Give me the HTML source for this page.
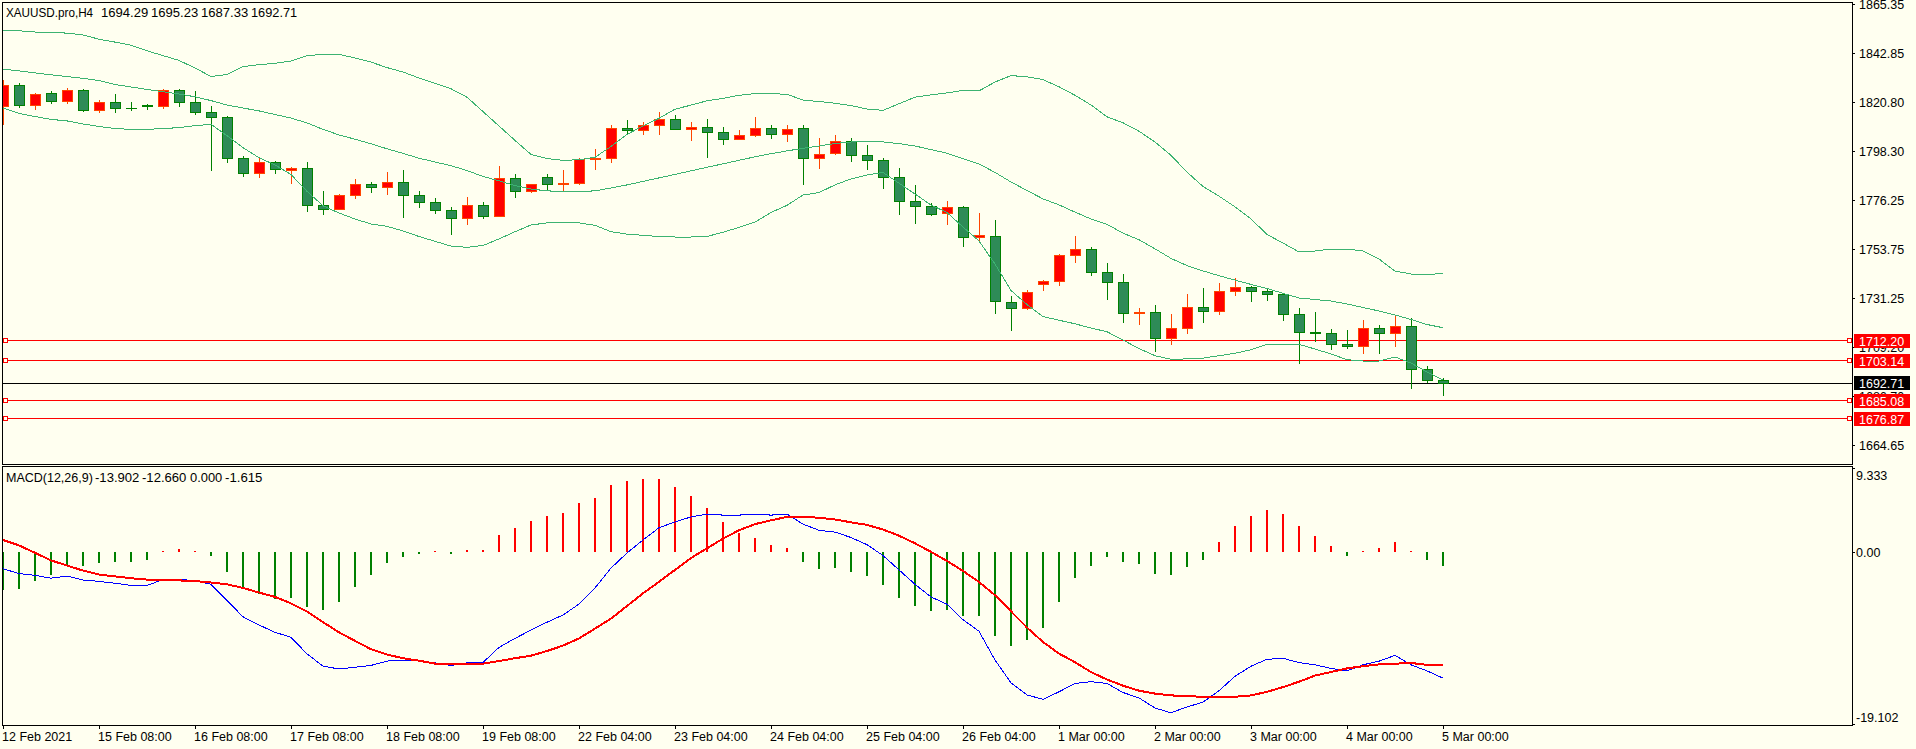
<!DOCTYPE html>
<html><head><meta charset="utf-8"><title>XAUUSD.pro,H4</title>
<style>html,body{margin:0;padding:0;background:#FFFFF0;overflow:hidden;width:1916px;height:749px}svg{display:block}</style>
</head><body>
<svg width="1916" height="749" viewBox="0 0 1916 749" shape-rendering="crispEdges">
<defs><clipPath id="cm"><rect x="3" y="3" width="1849" height="461"/></clipPath><clipPath id="cd"><rect x="3" y="467" width="1849" height="258"/></clipPath></defs>
<rect x="0" y="0" width="1916" height="749" fill="#FFFFF0"/>
<g clip-path="url(#cm)">
<rect x="3" y="340" width="1849" height="1" fill="#FF0000"/>
<rect x="3" y="360" width="1849" height="1" fill="#FF0000"/>
<rect x="3" y="400" width="1849" height="1" fill="#FF0000"/>
<rect x="3" y="418" width="1849" height="1" fill="#FF0000"/>
<rect x="3" y="383" width="1849" height="1" fill="#000000"/>
<rect x="3" y="80" width="1" height="45" fill="#FF4500"/>
<rect x="-2" y="85" width="11" height="22" fill="#FF4500"/>
<rect x="-1" y="86" width="9" height="20" fill="#FF0000"/>
<rect x="19" y="83" width="1" height="25" fill="#008000"/>
<rect x="14" y="85" width="11" height="21" fill="#008000"/>
<rect x="15" y="86" width="9" height="19" fill="#2E8B57"/>
<rect x="35" y="93" width="1" height="17" fill="#FF4500"/>
<rect x="30" y="94" width="11" height="12" fill="#FF4500"/>
<rect x="31" y="95" width="9" height="10" fill="#FF0000"/>
<rect x="51" y="91" width="1" height="13" fill="#008000"/>
<rect x="46" y="93" width="11" height="9" fill="#008000"/>
<rect x="47" y="94" width="9" height="7" fill="#2E8B57"/>
<rect x="67" y="88" width="1" height="16" fill="#FF4500"/>
<rect x="62" y="90" width="11" height="12" fill="#FF4500"/>
<rect x="63" y="91" width="9" height="10" fill="#FF0000"/>
<rect x="83" y="89" width="1" height="23" fill="#008000"/>
<rect x="78" y="90" width="11" height="21" fill="#008000"/>
<rect x="79" y="91" width="9" height="19" fill="#2E8B57"/>
<rect x="99" y="100" width="1" height="13" fill="#FF4500"/>
<rect x="94" y="102" width="11" height="9" fill="#FF4500"/>
<rect x="95" y="103" width="9" height="7" fill="#FF0000"/>
<rect x="115" y="94" width="1" height="19" fill="#008000"/>
<rect x="110" y="102" width="11" height="7" fill="#008000"/>
<rect x="111" y="103" width="9" height="5" fill="#2E8B57"/>
<rect x="131" y="102" width="1" height="9" fill="#008000"/>
<rect x="126" y="108" width="11" height="1" fill="#008000"/>
<rect x="147" y="104" width="1" height="6" fill="#008000"/>
<rect x="142" y="105" width="11" height="2" fill="#008000"/>
<rect x="163" y="89" width="1" height="20" fill="#FF4500"/>
<rect x="158" y="90" width="11" height="17" fill="#FF4500"/>
<rect x="159" y="91" width="9" height="15" fill="#FF0000"/>
<rect x="179" y="89" width="1" height="18" fill="#008000"/>
<rect x="174" y="90" width="11" height="13" fill="#008000"/>
<rect x="175" y="91" width="9" height="11" fill="#2E8B57"/>
<rect x="195" y="91" width="1" height="24" fill="#008000"/>
<rect x="190" y="102" width="11" height="11" fill="#008000"/>
<rect x="191" y="103" width="9" height="9" fill="#2E8B57"/>
<rect x="211" y="106" width="1" height="65" fill="#008000"/>
<rect x="206" y="112" width="11" height="6" fill="#008000"/>
<rect x="207" y="113" width="9" height="4" fill="#2E8B57"/>
<rect x="227" y="116" width="1" height="47" fill="#008000"/>
<rect x="222" y="117" width="11" height="42" fill="#008000"/>
<rect x="223" y="118" width="9" height="40" fill="#2E8B57"/>
<rect x="243" y="156" width="1" height="21" fill="#008000"/>
<rect x="238" y="158" width="11" height="16" fill="#008000"/>
<rect x="239" y="159" width="9" height="14" fill="#2E8B57"/>
<rect x="259" y="158" width="1" height="20" fill="#FF4500"/>
<rect x="254" y="162" width="11" height="12" fill="#FF4500"/>
<rect x="255" y="163" width="9" height="10" fill="#FF0000"/>
<rect x="275" y="161" width="1" height="13" fill="#008000"/>
<rect x="270" y="162" width="11" height="8" fill="#008000"/>
<rect x="271" y="163" width="9" height="6" fill="#2E8B57"/>
<rect x="291" y="167" width="1" height="17" fill="#FF4500"/>
<rect x="286" y="168" width="11" height="3" fill="#FF4500"/>
<rect x="287" y="169" width="9" height="1" fill="#FF0000"/>
<rect x="307" y="162" width="1" height="50" fill="#008000"/>
<rect x="302" y="168" width="11" height="38" fill="#008000"/>
<rect x="303" y="169" width="9" height="36" fill="#2E8B57"/>
<rect x="323" y="191" width="1" height="24" fill="#008000"/>
<rect x="318" y="205" width="11" height="5" fill="#008000"/>
<rect x="319" y="206" width="9" height="3" fill="#2E8B57"/>
<rect x="339" y="194" width="1" height="16" fill="#FF4500"/>
<rect x="334" y="195" width="11" height="15" fill="#FF4500"/>
<rect x="335" y="196" width="9" height="13" fill="#FF0000"/>
<rect x="355" y="179" width="1" height="20" fill="#FF4500"/>
<rect x="350" y="184" width="11" height="12" fill="#FF4500"/>
<rect x="351" y="185" width="9" height="10" fill="#FF0000"/>
<rect x="371" y="182" width="1" height="11" fill="#008000"/>
<rect x="366" y="184" width="11" height="4" fill="#008000"/>
<rect x="367" y="185" width="9" height="2" fill="#2E8B57"/>
<rect x="387" y="172" width="1" height="23" fill="#FF4500"/>
<rect x="382" y="182" width="11" height="6" fill="#FF4500"/>
<rect x="383" y="183" width="9" height="4" fill="#FF0000"/>
<rect x="403" y="170" width="1" height="48" fill="#008000"/>
<rect x="398" y="182" width="11" height="14" fill="#008000"/>
<rect x="399" y="183" width="9" height="12" fill="#2E8B57"/>
<rect x="419" y="191" width="1" height="17" fill="#008000"/>
<rect x="414" y="195" width="11" height="8" fill="#008000"/>
<rect x="415" y="196" width="9" height="6" fill="#2E8B57"/>
<rect x="435" y="198" width="1" height="16" fill="#008000"/>
<rect x="430" y="202" width="11" height="9" fill="#008000"/>
<rect x="431" y="203" width="9" height="7" fill="#2E8B57"/>
<rect x="451" y="207" width="1" height="28" fill="#008000"/>
<rect x="446" y="210" width="11" height="9" fill="#008000"/>
<rect x="447" y="211" width="9" height="7" fill="#2E8B57"/>
<rect x="467" y="197" width="1" height="28" fill="#FF4500"/>
<rect x="462" y="205" width="11" height="14" fill="#FF4500"/>
<rect x="463" y="206" width="9" height="12" fill="#FF0000"/>
<rect x="483" y="202" width="1" height="17" fill="#008000"/>
<rect x="478" y="205" width="11" height="12" fill="#008000"/>
<rect x="479" y="206" width="9" height="10" fill="#2E8B57"/>
<rect x="499" y="166" width="1" height="51" fill="#FF4500"/>
<rect x="494" y="178" width="11" height="39" fill="#FF4500"/>
<rect x="495" y="179" width="9" height="37" fill="#FF0000"/>
<rect x="515" y="174" width="1" height="24" fill="#008000"/>
<rect x="510" y="178" width="11" height="14" fill="#008000"/>
<rect x="511" y="179" width="9" height="12" fill="#2E8B57"/>
<rect x="531" y="184" width="1" height="9" fill="#FF4500"/>
<rect x="526" y="184" width="11" height="8" fill="#FF4500"/>
<rect x="527" y="185" width="9" height="6" fill="#FF0000"/>
<rect x="547" y="174" width="1" height="16" fill="#008000"/>
<rect x="542" y="177" width="11" height="8" fill="#008000"/>
<rect x="543" y="178" width="9" height="6" fill="#2E8B57"/>
<rect x="563" y="170" width="1" height="21" fill="#FF4500"/>
<rect x="558" y="183" width="11" height="2" fill="#FF4500"/>
<rect x="579" y="158" width="1" height="27" fill="#FF4500"/>
<rect x="574" y="159" width="11" height="25" fill="#FF4500"/>
<rect x="575" y="160" width="9" height="23" fill="#FF0000"/>
<rect x="595" y="149" width="1" height="21" fill="#FF4500"/>
<rect x="590" y="158" width="11" height="2" fill="#FF4500"/>
<rect x="611" y="125" width="1" height="38" fill="#FF4500"/>
<rect x="606" y="128" width="11" height="31" fill="#FF4500"/>
<rect x="607" y="129" width="9" height="29" fill="#FF0000"/>
<rect x="627" y="120" width="1" height="14" fill="#008000"/>
<rect x="622" y="128" width="11" height="3" fill="#008000"/>
<rect x="623" y="129" width="9" height="1" fill="#2E8B57"/>
<rect x="643" y="122" width="1" height="13" fill="#FF4500"/>
<rect x="638" y="125" width="11" height="6" fill="#FF4500"/>
<rect x="639" y="126" width="9" height="4" fill="#FF0000"/>
<rect x="659" y="112" width="1" height="23" fill="#FF4500"/>
<rect x="654" y="119" width="11" height="7" fill="#FF4500"/>
<rect x="655" y="120" width="9" height="5" fill="#FF0000"/>
<rect x="675" y="115" width="1" height="15" fill="#008000"/>
<rect x="670" y="119" width="11" height="11" fill="#008000"/>
<rect x="671" y="120" width="9" height="9" fill="#2E8B57"/>
<rect x="691" y="122" width="1" height="19" fill="#FF4500"/>
<rect x="686" y="127" width="11" height="3" fill="#FF4500"/>
<rect x="687" y="128" width="9" height="1" fill="#FF0000"/>
<rect x="707" y="119" width="1" height="39" fill="#008000"/>
<rect x="702" y="127" width="11" height="6" fill="#008000"/>
<rect x="703" y="128" width="9" height="4" fill="#2E8B57"/>
<rect x="723" y="127" width="1" height="18" fill="#008000"/>
<rect x="718" y="132" width="11" height="8" fill="#008000"/>
<rect x="719" y="133" width="9" height="6" fill="#2E8B57"/>
<rect x="739" y="130" width="1" height="10" fill="#FF4500"/>
<rect x="734" y="135" width="11" height="5" fill="#FF4500"/>
<rect x="735" y="136" width="9" height="3" fill="#FF0000"/>
<rect x="755" y="117" width="1" height="20" fill="#FF4500"/>
<rect x="750" y="128" width="11" height="8" fill="#FF4500"/>
<rect x="751" y="129" width="9" height="6" fill="#FF0000"/>
<rect x="771" y="125" width="1" height="14" fill="#008000"/>
<rect x="766" y="128" width="11" height="7" fill="#008000"/>
<rect x="767" y="129" width="9" height="5" fill="#2E8B57"/>
<rect x="787" y="125" width="1" height="17" fill="#FF4500"/>
<rect x="782" y="129" width="11" height="6" fill="#FF4500"/>
<rect x="783" y="130" width="9" height="4" fill="#FF0000"/>
<rect x="803" y="125" width="1" height="60" fill="#008000"/>
<rect x="798" y="128" width="11" height="31" fill="#008000"/>
<rect x="799" y="129" width="9" height="29" fill="#2E8B57"/>
<rect x="819" y="138" width="1" height="31" fill="#FF4500"/>
<rect x="814" y="154" width="11" height="5" fill="#FF4500"/>
<rect x="815" y="155" width="9" height="3" fill="#FF0000"/>
<rect x="835" y="135" width="1" height="20" fill="#FF4500"/>
<rect x="830" y="141" width="11" height="13" fill="#FF4500"/>
<rect x="831" y="142" width="9" height="11" fill="#FF0000"/>
<rect x="851" y="138" width="1" height="24" fill="#008000"/>
<rect x="846" y="141" width="11" height="15" fill="#008000"/>
<rect x="847" y="142" width="9" height="13" fill="#2E8B57"/>
<rect x="867" y="145" width="1" height="25" fill="#008000"/>
<rect x="862" y="155" width="11" height="6" fill="#008000"/>
<rect x="863" y="156" width="9" height="4" fill="#2E8B57"/>
<rect x="883" y="158" width="1" height="31" fill="#008000"/>
<rect x="878" y="160" width="11" height="18" fill="#008000"/>
<rect x="879" y="161" width="9" height="16" fill="#2E8B57"/>
<rect x="899" y="168" width="1" height="47" fill="#008000"/>
<rect x="894" y="177" width="11" height="25" fill="#008000"/>
<rect x="895" y="178" width="9" height="23" fill="#2E8B57"/>
<rect x="915" y="185" width="1" height="39" fill="#008000"/>
<rect x="910" y="201" width="11" height="6" fill="#008000"/>
<rect x="911" y="202" width="9" height="4" fill="#2E8B57"/>
<rect x="931" y="203" width="1" height="13" fill="#008000"/>
<rect x="926" y="206" width="11" height="9" fill="#008000"/>
<rect x="927" y="207" width="9" height="7" fill="#2E8B57"/>
<rect x="947" y="201" width="1" height="24" fill="#FF4500"/>
<rect x="942" y="207" width="11" height="7" fill="#FF4500"/>
<rect x="943" y="208" width="9" height="5" fill="#FF0000"/>
<rect x="963" y="206" width="1" height="41" fill="#008000"/>
<rect x="958" y="207" width="11" height="31" fill="#008000"/>
<rect x="959" y="208" width="9" height="29" fill="#2E8B57"/>
<rect x="979" y="213" width="1" height="29" fill="#FF4500"/>
<rect x="974" y="235" width="11" height="3" fill="#FF4500"/>
<rect x="975" y="236" width="9" height="1" fill="#FF0000"/>
<rect x="995" y="220" width="1" height="94" fill="#008000"/>
<rect x="990" y="236" width="11" height="66" fill="#008000"/>
<rect x="991" y="237" width="9" height="64" fill="#2E8B57"/>
<rect x="1011" y="296" width="1" height="35" fill="#008000"/>
<rect x="1006" y="302" width="11" height="7" fill="#008000"/>
<rect x="1007" y="303" width="9" height="5" fill="#2E8B57"/>
<rect x="1027" y="290" width="1" height="20" fill="#FF4500"/>
<rect x="1022" y="292" width="11" height="17" fill="#FF4500"/>
<rect x="1023" y="293" width="9" height="15" fill="#FF0000"/>
<rect x="1043" y="280" width="1" height="11" fill="#FF4500"/>
<rect x="1038" y="281" width="11" height="4" fill="#FF4500"/>
<rect x="1039" y="282" width="9" height="2" fill="#FF0000"/>
<rect x="1059" y="254" width="1" height="32" fill="#FF4500"/>
<rect x="1054" y="255" width="11" height="27" fill="#FF4500"/>
<rect x="1055" y="256" width="9" height="25" fill="#FF0000"/>
<rect x="1075" y="236" width="1" height="27" fill="#FF4500"/>
<rect x="1070" y="249" width="11" height="7" fill="#FF4500"/>
<rect x="1071" y="250" width="9" height="5" fill="#FF0000"/>
<rect x="1091" y="247" width="1" height="29" fill="#008000"/>
<rect x="1086" y="249" width="11" height="24" fill="#008000"/>
<rect x="1087" y="250" width="9" height="22" fill="#2E8B57"/>
<rect x="1107" y="263" width="1" height="37" fill="#008000"/>
<rect x="1102" y="272" width="11" height="11" fill="#008000"/>
<rect x="1103" y="273" width="9" height="9" fill="#2E8B57"/>
<rect x="1123" y="274" width="1" height="49" fill="#008000"/>
<rect x="1118" y="282" width="11" height="32" fill="#008000"/>
<rect x="1119" y="283" width="9" height="30" fill="#2E8B57"/>
<rect x="1139" y="308" width="1" height="17" fill="#FF4500"/>
<rect x="1134" y="312" width="11" height="2" fill="#FF4500"/>
<rect x="1155" y="305" width="1" height="47" fill="#008000"/>
<rect x="1150" y="312" width="11" height="27" fill="#008000"/>
<rect x="1151" y="313" width="9" height="25" fill="#2E8B57"/>
<rect x="1171" y="314" width="1" height="31" fill="#FF4500"/>
<rect x="1166" y="328" width="11" height="11" fill="#FF4500"/>
<rect x="1167" y="329" width="9" height="9" fill="#FF0000"/>
<rect x="1187" y="294" width="1" height="40" fill="#FF4500"/>
<rect x="1182" y="307" width="11" height="22" fill="#FF4500"/>
<rect x="1183" y="308" width="9" height="20" fill="#FF0000"/>
<rect x="1203" y="288" width="1" height="35" fill="#008000"/>
<rect x="1198" y="307" width="11" height="5" fill="#008000"/>
<rect x="1199" y="308" width="9" height="3" fill="#2E8B57"/>
<rect x="1219" y="283" width="1" height="32" fill="#FF4500"/>
<rect x="1214" y="291" width="11" height="21" fill="#FF4500"/>
<rect x="1215" y="292" width="9" height="19" fill="#FF0000"/>
<rect x="1235" y="278" width="1" height="18" fill="#FF4500"/>
<rect x="1230" y="287" width="11" height="5" fill="#FF4500"/>
<rect x="1231" y="288" width="9" height="3" fill="#FF0000"/>
<rect x="1251" y="286" width="1" height="16" fill="#008000"/>
<rect x="1246" y="287" width="11" height="5" fill="#008000"/>
<rect x="1247" y="288" width="9" height="3" fill="#2E8B57"/>
<rect x="1267" y="288" width="1" height="13" fill="#008000"/>
<rect x="1262" y="291" width="11" height="4" fill="#008000"/>
<rect x="1263" y="292" width="9" height="2" fill="#2E8B57"/>
<rect x="1283" y="293" width="1" height="28" fill="#008000"/>
<rect x="1278" y="294" width="11" height="21" fill="#008000"/>
<rect x="1279" y="295" width="9" height="19" fill="#2E8B57"/>
<rect x="1299" y="308" width="1" height="56" fill="#008000"/>
<rect x="1294" y="314" width="11" height="19" fill="#008000"/>
<rect x="1295" y="315" width="9" height="17" fill="#2E8B57"/>
<rect x="1315" y="312" width="1" height="30" fill="#008000"/>
<rect x="1310" y="332" width="11" height="2" fill="#008000"/>
<rect x="1331" y="329" width="1" height="21" fill="#008000"/>
<rect x="1326" y="333" width="11" height="12" fill="#008000"/>
<rect x="1327" y="334" width="9" height="10" fill="#2E8B57"/>
<rect x="1347" y="330" width="1" height="19" fill="#008000"/>
<rect x="1342" y="344" width="11" height="3" fill="#008000"/>
<rect x="1343" y="345" width="9" height="1" fill="#2E8B57"/>
<rect x="1363" y="320" width="1" height="34" fill="#FF4500"/>
<rect x="1358" y="328" width="11" height="19" fill="#FF4500"/>
<rect x="1359" y="329" width="9" height="17" fill="#FF0000"/>
<rect x="1379" y="325" width="1" height="29" fill="#008000"/>
<rect x="1374" y="328" width="11" height="6" fill="#008000"/>
<rect x="1375" y="329" width="9" height="4" fill="#2E8B57"/>
<rect x="1395" y="316" width="1" height="31" fill="#FF4500"/>
<rect x="1390" y="326" width="11" height="8" fill="#FF4500"/>
<rect x="1391" y="327" width="9" height="6" fill="#FF0000"/>
<rect x="1411" y="318" width="1" height="71" fill="#008000"/>
<rect x="1406" y="326" width="11" height="44" fill="#008000"/>
<rect x="1407" y="327" width="9" height="42" fill="#2E8B57"/>
<rect x="1427" y="366" width="1" height="17" fill="#008000"/>
<rect x="1422" y="369" width="11" height="12" fill="#008000"/>
<rect x="1423" y="370" width="9" height="10" fill="#2E8B57"/>
<rect x="1443" y="378" width="1" height="18" fill="#008000"/>
<rect x="1438" y="380" width="11" height="4" fill="#008000"/>
<rect x="1439" y="381" width="9" height="2" fill="#2E8B57"/>
<polyline points="3,30.1 19,30.8 35,32.0 51,32.0 67,33.2 83,34.9 99,39.2 115,42.1 131,45.2 147,50.8 163,55.6 179,60.4 195,68.0 211,76.5 227,74.5 243,66.6 259,64.7 275,63.3 291,61.1 307,55.6 323,54.4 339,54.4 355,58.0 371,62.1 387,67.6 403,72.0 419,78.0 435,83.2 451,88.8 467,97.2 483,111.6 499,126.0 515,140.4 531,154.4 547,158.5 563,160.4 579,159.7 595,157.3 611,146.5 627,134.4 643,126.0 659,118.3 675,109.2 691,105.1 707,100.8 723,98.4 739,95.3 755,93.6 771,93.6 787,94.3 803,100.1 819,101.5 835,103.2 851,105.6 867,109.0 883,110.4 899,103.7 915,97.2 931,94.8 947,92.9 963,90.4 979,90.9 995,82.0 1011,75.6 1027,76.8 1043,79.6 1059,86.8 1075,95.3 1091,105.0 1107,116.8 1123,122.8 1139,131.2 1155,142.0 1171,155.3 1187,172.1 1203,186.5 1219,196.1 1235,206.9 1251,218.9 1267,234.5 1283,243.0 1299,252.0 1315,251.0 1331,249.0 1347,249.0 1363,251.0 1379,259.0 1395,271.0 1411,274.0 1427,275.0 1443,273.0" fill="none" stroke="#3CB371" stroke-width="1" shape-rendering="crispEdges" stroke-linejoin="round"/>
<polyline points="3,69.2 19,70.9 35,72.9 51,74.8 67,76.5 83,78.4 99,80.5 115,84.5 131,87.0 147,89.4 163,91.8 179,94.0 195,96.8 211,100.6 227,105.0 243,108.0 259,110.9 275,114.5 291,118.1 307,122.9 323,129.4 339,134.9 355,139.2 371,143.8 387,148.8 403,153.4 419,158.2 435,162.0 451,165.7 467,170.5 483,176.5 499,180.8 515,185.6 531,189.0 547,190.9 563,191.4 579,191.4 595,190.9 611,188.0 627,184.9 643,181.4 659,177.9 675,174.4 691,170.8 707,167.3 723,163.8 739,160.3 755,156.8 771,153.7 787,150.9 803,148.3 819,146.0 835,143.5 851,142.0 867,141.2 883,141.9 899,143.6 915,146.0 931,149.6 947,153.2 963,158.7 979,164.0 995,172.4 1011,182.0 1027,190.5 1043,198.9 1059,204.9 1075,212.1 1091,219.0 1107,224.3 1123,233.2 1139,239.7 1155,248.8 1171,258.4 1187,265.6 1203,270.9 1219,275.7 1235,280.1 1251,284.4 1267,288.5 1283,293.3 1299,298.0 1315,299.5 1331,301.0 1347,304.0 1363,307.5 1379,311.0 1395,315.0 1411,319.5 1427,324.5 1443,327.7" fill="none" stroke="#3CB371" stroke-width="1" shape-rendering="crispEdges" stroke-linejoin="round"/>
<polyline points="3,108.1 19,113.4 35,116.5 51,119.4 67,120.9 83,124.0 99,126.4 115,128.6 131,129.3 147,129.3 163,128.6 179,127.6 195,125.7 211,124.3 227,135.7 243,147.7 259,157.7 275,164.9 291,174.5 307,191.3 323,205.8 339,213.0 355,219.0 371,224.0 387,226.3 403,231.0 419,236.5 435,241.3 451,246.1 467,247.3 483,245.5 499,238.9 515,231.7 531,225.0 547,222.9 563,222.9 579,222.9 595,225.3 611,231.7 627,234.1 643,235.3 659,236.5 675,237.0 691,237.0 707,236.5 723,232.2 739,227.4 755,222.1 771,212.5 787,205.3 803,195.0 819,192.6 835,184.9 851,178.9 867,175.0 883,172.4 899,183.2 915,194.0 931,205.0 947,212.5 963,227.0 979,240.9 995,264.0 1011,290.5 1027,304.5 1043,316.6 1059,320.2 1075,323.8 1091,328.1 1107,331.7 1123,340.1 1139,348.5 1155,355.7 1171,359.3 1187,358.9 1203,358.1 1219,355.7 1235,353.3 1251,349.7 1267,344.4 1283,344.4 1299,344.4 1315,349.0 1331,354.0 1347,359.7 1363,361.0 1379,361.0 1395,357.0 1411,363.0 1427,372.0 1443,380.0" fill="none" stroke="#3CB371" stroke-width="1" shape-rendering="crispEdges" stroke-linejoin="round"/>
</g>
<rect x="3" y="338" width="5" height="5" fill="#FF0000"/>
<rect x="4" y="339" width="3" height="3" fill="#FFFFF0"/>
<rect x="1847" y="338" width="5" height="5" fill="#FF0000"/>
<rect x="1848" y="339" width="3" height="3" fill="#FFFFF0"/>
<rect x="3" y="358" width="5" height="5" fill="#FF0000"/>
<rect x="4" y="359" width="3" height="3" fill="#FFFFF0"/>
<rect x="1847" y="358" width="5" height="5" fill="#FF0000"/>
<rect x="1848" y="359" width="3" height="3" fill="#FFFFF0"/>
<rect x="3" y="398" width="5" height="5" fill="#FF0000"/>
<rect x="4" y="399" width="3" height="3" fill="#FFFFF0"/>
<rect x="1847" y="398" width="5" height="5" fill="#FF0000"/>
<rect x="1848" y="399" width="3" height="3" fill="#FFFFF0"/>
<rect x="3" y="416" width="5" height="5" fill="#FF0000"/>
<rect x="4" y="417" width="3" height="3" fill="#FFFFF0"/>
<rect x="1847" y="416" width="5" height="5" fill="#FF0000"/>
<rect x="1848" y="417" width="3" height="3" fill="#FFFFF0"/>
<rect x="2" y="2" width="1851" height="1" fill="#000"/>
<rect x="2" y="2" width="1" height="463" fill="#000"/>
<rect x="1852" y="2" width="1" height="463" fill="#000"/>
<rect x="2" y="464" width="1851" height="1" fill="#000"/>
<g clip-path="url(#cd)">
<rect x="2" y="552" width="2" height="38" fill="#008000"/>
<rect x="18" y="552" width="2" height="37" fill="#008000"/>
<rect x="34" y="552" width="2" height="29" fill="#008000"/>
<rect x="50" y="552" width="2" height="23" fill="#008000"/>
<rect x="66" y="552" width="2" height="14" fill="#008000"/>
<rect x="82" y="552" width="2" height="14" fill="#008000"/>
<rect x="98" y="552" width="2" height="11" fill="#008000"/>
<rect x="114" y="552" width="2" height="10" fill="#008000"/>
<rect x="130" y="552" width="2" height="10" fill="#008000"/>
<rect x="146" y="552" width="2" height="8" fill="#008000"/>
<rect x="162" y="551" width="2" height="1" fill="#FF0000"/>
<rect x="178" y="549" width="2" height="3" fill="#FF0000"/>
<rect x="194" y="551" width="2" height="1" fill="#FF0000"/>
<rect x="210" y="552" width="2" height="4" fill="#008000"/>
<rect x="226" y="552" width="2" height="20" fill="#008000"/>
<rect x="242" y="552" width="2" height="37" fill="#008000"/>
<rect x="258" y="552" width="2" height="42" fill="#008000"/>
<rect x="274" y="552" width="2" height="47" fill="#008000"/>
<rect x="290" y="552" width="2" height="46" fill="#008000"/>
<rect x="306" y="552" width="2" height="55" fill="#008000"/>
<rect x="322" y="552" width="2" height="58" fill="#008000"/>
<rect x="338" y="552" width="2" height="50" fill="#008000"/>
<rect x="354" y="552" width="2" height="35" fill="#008000"/>
<rect x="370" y="552" width="2" height="23" fill="#008000"/>
<rect x="386" y="552" width="2" height="11" fill="#008000"/>
<rect x="402" y="552" width="2" height="5" fill="#008000"/>
<rect x="418" y="552" width="2" height="2" fill="#008000"/>
<rect x="434" y="551" width="2" height="1" fill="#FF0000"/>
<rect x="450" y="552" width="2" height="2" fill="#008000"/>
<rect x="466" y="550" width="2" height="2" fill="#FF0000"/>
<rect x="482" y="550" width="2" height="2" fill="#FF0000"/>
<rect x="498" y="535" width="2" height="17" fill="#FF0000"/>
<rect x="514" y="528" width="2" height="24" fill="#FF0000"/>
<rect x="530" y="521" width="2" height="31" fill="#FF0000"/>
<rect x="546" y="516" width="2" height="36" fill="#FF0000"/>
<rect x="562" y="513" width="2" height="39" fill="#FF0000"/>
<rect x="578" y="503" width="2" height="49" fill="#FF0000"/>
<rect x="594" y="498" width="2" height="54" fill="#FF0000"/>
<rect x="610" y="485" width="2" height="67" fill="#FF0000"/>
<rect x="626" y="481" width="2" height="71" fill="#FF0000"/>
<rect x="642" y="479" width="2" height="73" fill="#FF0000"/>
<rect x="658" y="479" width="2" height="73" fill="#FF0000"/>
<rect x="674" y="487" width="2" height="65" fill="#FF0000"/>
<rect x="690" y="496" width="2" height="56" fill="#FF0000"/>
<rect x="706" y="508" width="2" height="44" fill="#FF0000"/>
<rect x="722" y="522" width="2" height="30" fill="#FF0000"/>
<rect x="738" y="533" width="2" height="19" fill="#FF0000"/>
<rect x="754" y="538" width="2" height="14" fill="#FF0000"/>
<rect x="770" y="545" width="2" height="7" fill="#FF0000"/>
<rect x="786" y="548" width="2" height="4" fill="#FF0000"/>
<rect x="802" y="552" width="2" height="10" fill="#008000"/>
<rect x="818" y="552" width="2" height="17" fill="#008000"/>
<rect x="834" y="552" width="2" height="16" fill="#008000"/>
<rect x="850" y="552" width="2" height="20" fill="#008000"/>
<rect x="866" y="552" width="2" height="24" fill="#008000"/>
<rect x="882" y="552" width="2" height="33" fill="#008000"/>
<rect x="898" y="552" width="2" height="46" fill="#008000"/>
<rect x="914" y="552" width="2" height="54" fill="#008000"/>
<rect x="930" y="552" width="2" height="59" fill="#008000"/>
<rect x="946" y="552" width="2" height="58" fill="#008000"/>
<rect x="962" y="552" width="2" height="64" fill="#008000"/>
<rect x="978" y="552" width="2" height="64" fill="#008000"/>
<rect x="994" y="552" width="2" height="84" fill="#008000"/>
<rect x="1010" y="552" width="2" height="94" fill="#008000"/>
<rect x="1026" y="552" width="2" height="88" fill="#008000"/>
<rect x="1042" y="552" width="2" height="76" fill="#008000"/>
<rect x="1058" y="552" width="2" height="50" fill="#008000"/>
<rect x="1074" y="552" width="2" height="26" fill="#008000"/>
<rect x="1090" y="552" width="2" height="14" fill="#008000"/>
<rect x="1106" y="552" width="2" height="5" fill="#008000"/>
<rect x="1122" y="552" width="2" height="10" fill="#008000"/>
<rect x="1138" y="552" width="2" height="12" fill="#008000"/>
<rect x="1154" y="552" width="2" height="22" fill="#008000"/>
<rect x="1170" y="552" width="2" height="23" fill="#008000"/>
<rect x="1186" y="552" width="2" height="15" fill="#008000"/>
<rect x="1202" y="552" width="2" height="8" fill="#008000"/>
<rect x="1218" y="542" width="2" height="10" fill="#FF0000"/>
<rect x="1234" y="526" width="2" height="26" fill="#FF0000"/>
<rect x="1250" y="516" width="2" height="36" fill="#FF0000"/>
<rect x="1266" y="510" width="2" height="42" fill="#FF0000"/>
<rect x="1282" y="514" width="2" height="38" fill="#FF0000"/>
<rect x="1298" y="526" width="2" height="26" fill="#FF0000"/>
<rect x="1314" y="536" width="2" height="16" fill="#FF0000"/>
<rect x="1330" y="546" width="2" height="6" fill="#FF0000"/>
<rect x="1346" y="552" width="2" height="4" fill="#008000"/>
<rect x="1362" y="551" width="2" height="1" fill="#FF0000"/>
<rect x="1378" y="548" width="2" height="4" fill="#FF0000"/>
<rect x="1394" y="542" width="2" height="10" fill="#FF0000"/>
<rect x="1410" y="551" width="2" height="1" fill="#FF0000"/>
<rect x="1426" y="552" width="2" height="8" fill="#008000"/>
<rect x="1442" y="552" width="2" height="14" fill="#008000"/>
<polyline points="3,568.8 19,573.5 35,575.3 51,578.2 67,576.0 83,580.0 99,581.4 115,583.2 131,585.4 147,585.4 163,579.6 179,579.3 195,580.7 211,584.3 227,600.5 243,616.8 259,625.0 275,632.3 291,637.3 307,653.9 323,666.1 339,669.0 355,667.2 371,665.4 387,661.1 403,660.0 419,661.1 435,662.9 451,665.4 467,662.9 483,662.5 499,647.4 515,638.4 531,630.1 547,622.2 563,615.0 579,604.1 595,587.9 611,568.1 627,553.0 643,540.0 659,527.7 675,522.0 691,516.9 707,514.1 723,515.1 739,515.1 755,514.1 771,515.1 787,514.1 803,524.1 819,530.3 835,532.1 851,537.5 867,544.7 883,555.5 899,569.9 915,584.3 931,597.0 947,604.2 963,619.7 979,631.2 995,660.0 1011,682.8 1027,695.0 1043,699.3 1059,691.8 1075,683.5 1091,681.7 1107,683.5 1123,692.5 1139,697.9 1155,708.0 1171,712.8 1187,706.9 1203,702.2 1219,690.7 1235,676.3 1251,666.2 1267,659.3 1283,658.3 1299,662.6 1315,664.8 1331,668.4 1347,670.9 1363,664.8 1379,661.2 1395,655.4 1411,664.8 1427,670.9 1443,678.1" fill="none" stroke="#0000FF" stroke-width="1" shape-rendering="crispEdges" stroke-linejoin="round"/>
<polyline points="3,540.0 19,545.4 35,552.8 51,560.4 67,565.5 83,570.6 99,574.6 115,576.4 131,578.2 147,579.6 163,580.0 179,580.4 195,581.1 211,582.5 227,584.3 243,587.9 259,592.6 275,596.9 291,603.4 307,611.4 323,622.2 339,632.3 355,640.9 371,649.2 387,654.6 403,658.2 419,660.7 435,663.6 451,664.3 467,664.3 483,663.6 499,661.1 515,658.2 531,655.7 547,651.0 563,645.6 579,638.4 595,628.6 611,618.6 627,606.0 643,593.3 659,581.8 675,569.9 691,558.0 707,548.3 723,538.6 739,530.3 755,524.1 771,520.3 787,516.9 803,516.9 819,517.7 835,519.5 851,522.3 867,524.9 883,529.5 899,535.7 915,543.3 931,551.9 947,560.9 963,570.9 979,582.0 995,595.2 1011,611.4 1027,627.6 1043,642.0 1059,653.6 1075,662.2 1091,672.1 1107,679.5 1123,685.7 1139,690.7 1155,693.6 1171,695.4 1187,696.1 1203,696.8 1219,696.8 1235,696.8 1251,695.4 1267,691.8 1283,687.1 1299,681.7 1315,675.6 1331,672.0 1347,668.4 1363,666.2 1379,664.4 1395,663.7 1411,663.0 1427,664.8 1443,665.5" fill="none" stroke="#FF0000" stroke-width="2" shape-rendering="crispEdges" stroke-linejoin="round"/>
</g>
<rect x="2" y="466" width="1851" height="1" fill="#000"/>
<rect x="2" y="466" width="1" height="260" fill="#000"/>
<rect x="1852" y="466" width="1" height="260" fill="#000"/>
<rect x="2" y="725" width="1851" height="1" fill="#000"/>
<g font-family='"Liberation Sans", sans-serif' font-size="12.5" fill="#000" shape-rendering="auto">
<rect x="1853" y="4" width="2" height="1" fill="#000"/>
<text x="1859" y="9">1865.35</text>
<rect x="1853" y="53" width="2" height="1" fill="#000"/>
<text x="1859" y="58">1842.85</text>
<rect x="1853" y="102" width="2" height="1" fill="#000"/>
<text x="1859" y="107">1820.80</text>
<rect x="1853" y="151" width="2" height="1" fill="#000"/>
<text x="1859" y="156">1798.30</text>
<rect x="1853" y="200" width="2" height="1" fill="#000"/>
<text x="1859" y="205">1776.25</text>
<rect x="1853" y="249" width="2" height="1" fill="#000"/>
<text x="1859" y="254">1753.75</text>
<rect x="1853" y="298" width="2" height="1" fill="#000"/>
<text x="1859" y="303">1731.25</text>
<rect x="1853" y="347" width="2" height="1" fill="#000"/>
<text x="1859" y="352">1709.20</text>
<rect x="1853" y="396" width="2" height="1" fill="#000"/>
<text x="1859" y="401">1686.70</text>
<rect x="1853" y="445" width="2" height="1" fill="#000"/>
<text x="1859" y="450">1664.65</text>
</g>
<g font-family='"Liberation Sans", sans-serif' font-size="12.5" fill="#FFF" shape-rendering="auto">
<rect x="1854" y="334" width="56" height="14" fill="#FF0000"/>
<text x="1859" y="346">1712.20</text>
<rect x="1854" y="354" width="56" height="14" fill="#FF0000"/>
<text x="1859" y="366">1703.14</text>
<rect x="1854" y="376" width="56" height="14" fill="#000000"/>
<text x="1859" y="388">1692.71</text>
<rect x="1854" y="394" width="56" height="14" fill="#FF0000"/>
<text x="1859" y="406">1685.08</text>
<rect x="1854" y="412" width="56" height="14" fill="#FF0000"/>
<text x="1859" y="424">1676.87</text>
</g>
<g font-family='"Liberation Sans", sans-serif' font-size="12.5" fill="#000" shape-rendering="auto">
<rect x="1853" y="468" width="2" height="1" fill="#000"/>
<text x="1856" y="480">9.333</text>
<rect x="1853" y="552" width="2" height="1" fill="#000"/>
<text x="1856" y="557">0.00</text>
<rect x="1853" y="724" width="2" height="1" fill="#000"/>
<text x="1856" y="722">-19.102</text>
</g>
<g font-family='"Liberation Sans", sans-serif' font-size="12.5" fill="#000" shape-rendering="auto">
<rect x="3" y="726" width="1" height="3" fill="#000"/>
<text x="2" y="741">12 Feb 2021</text>
<rect x="99" y="726" width="1" height="3" fill="#000"/>
<text x="98" y="741">15 Feb 08:00</text>
<rect x="195" y="726" width="1" height="3" fill="#000"/>
<text x="194" y="741">16 Feb 08:00</text>
<rect x="291" y="726" width="1" height="3" fill="#000"/>
<text x="290" y="741">17 Feb 08:00</text>
<rect x="387" y="726" width="1" height="3" fill="#000"/>
<text x="386" y="741">18 Feb 08:00</text>
<rect x="483" y="726" width="1" height="3" fill="#000"/>
<text x="482" y="741">19 Feb 08:00</text>
<rect x="579" y="726" width="1" height="3" fill="#000"/>
<text x="578" y="741">22 Feb 04:00</text>
<rect x="675" y="726" width="1" height="3" fill="#000"/>
<text x="674" y="741">23 Feb 04:00</text>
<rect x="771" y="726" width="1" height="3" fill="#000"/>
<text x="770" y="741">24 Feb 04:00</text>
<rect x="867" y="726" width="1" height="3" fill="#000"/>
<text x="866" y="741">25 Feb 04:00</text>
<rect x="963" y="726" width="1" height="3" fill="#000"/>
<text x="962" y="741">26 Feb 04:00</text>
<rect x="1059" y="726" width="1" height="3" fill="#000"/>
<text x="1058" y="741">1 Mar 00:00</text>
<rect x="1155" y="726" width="1" height="3" fill="#000"/>
<text x="1154" y="741">2 Mar 00:00</text>
<rect x="1251" y="726" width="1" height="3" fill="#000"/>
<text x="1250" y="741">3 Mar 00:00</text>
<rect x="1347" y="726" width="1" height="3" fill="#000"/>
<text x="1346" y="741">4 Mar 00:00</text>
<rect x="1443" y="726" width="1" height="3" fill="#000"/>
<text x="1442" y="741">5 Mar 00:00</text>
</g>
<g font-family='"Liberation Sans", sans-serif' font-size="12.5" fill="#000" shape-rendering="auto">
<text x="6" y="17" textLength="87.09" lengthAdjust="spacingAndGlyphs">XAUUSD.pro,H4</text>
<text x="101" y="17" textLength="47.19" lengthAdjust="spacingAndGlyphs">1694.29</text>
<text x="151" y="17" textLength="47.19" lengthAdjust="spacingAndGlyphs">1695.23</text>
<text x="201" y="17" textLength="47.19" lengthAdjust="spacingAndGlyphs">1687.33</text>
<text x="251" y="17" textLength="46.19" lengthAdjust="spacingAndGlyphs">1692.71</text>
<text x="6" y="482" textLength="86.84" lengthAdjust="spacingAndGlyphs">MACD(12,26,9)</text>
<text x="95" y="482" textLength="44.41" lengthAdjust="spacingAndGlyphs">-13.902</text>
<text x="142" y="482" textLength="44.41" lengthAdjust="spacingAndGlyphs">-12.660</text>
<text x="190" y="482" textLength="32.28" lengthAdjust="spacingAndGlyphs">0.000</text>
<text x="225" y="482" textLength="37.45" lengthAdjust="spacingAndGlyphs">-1.615</text>
</g>
</svg>
</body></html>
